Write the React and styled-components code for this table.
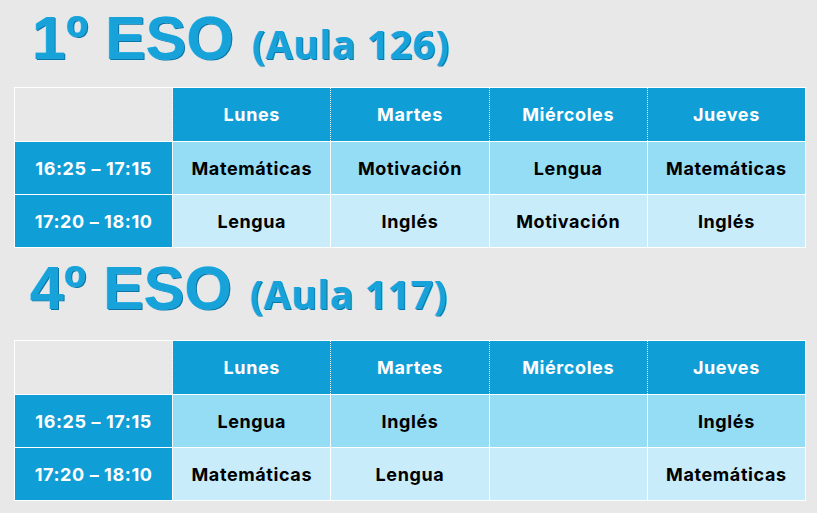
import React from "react";
import styled, { createGlobalStyle } from "styled-components";

const days = ["Lunes", "Martes", "Miércoles", "Jueves"];

const groups = [
  {
    course: "1º ESO",
    room: "(Aula 126)",
    rows: [
      ["16:25 – 17:15", ["Matemáticas", "Motivación", "Lengua", "Matemáticas"]],
      ["17:20 – 18:10", ["Lengua", "Inglés", "Motivación", "Inglés"]],
    ],
  },
  {
    course: "4º ESO",
    room: "(Aula 117)",
    rows: [
      ["16:25 – 17:15", ["Lengua", "Inglés", "", "Inglés"]],
      ["17:20 – 18:10", ["Matemáticas", "Lengua", "", "Matemáticas"]],
    ],
  },
];

export default function App() {
  return (
    <>
      <GlobalStyle />
      <StyledPage>
        {groups.map((g, k) => (
          <StyledSection key={g.course}>
            <StyledTitle $first={k === 0}>
              <StyledCourse>{g.course}</StyledCourse>
              <StyledRoom>{g.room}</StyledRoom>
            </StyledTitle>
            <StyledTable>
              <colgroup>
                <col style={{ width: "158px" }} />
                {days.map((d) => (
                  <col key={d} style={{ width: "158px" }} />
                ))}
              </colgroup>
              <thead>
                <tr>
                  <StyledCorner />
                  {days.map((d, j) => (
                    <StyledHead key={d} $last={j === days.length - 1}>
                      {d}
                    </StyledHead>
                  ))}
                </tr>
              </thead>
              <tbody>
                {g.rows.map(([time, subjects], i) => (
                  <tr key={time}>
                    <StyledTime>{time}</StyledTime>
                    {subjects.map((s, j) => (
                      <StyledCell key={j} $light={i % 2 === 1}>
                        {s}
                      </StyledCell>
                    ))}
                  </tr>
                ))}
              </tbody>
            </StyledTable>
          </StyledSection>
        ))}
      </StyledPage>
    </>
  );
}

const GlobalStyle = createGlobalStyle`
  body {
    margin: 0;
    background: #e8e8e8;
  }
`;

const StyledPage = styled.main`
  width: 817px;
  height: 513px;
  padding: 0 0 0 14px;
  box-sizing: border-box;
  overflow: hidden;
`;

const StyledSection = styled.section`
  display: flex;
  flex-direction: column;
`;

const StyledTitle = styled.h1`
  margin: 0;
  height: ${({ $first }) => ($first ? "87px" : "92px")};
  padding: ${({ $first }) => ($first ? "0 0 0 18px" : "2px 0 0 16px")};
  box-sizing: border-box;
  display: flex;
  align-items: baseline;
  gap: 18px;
  color: #17a2da;
  font-weight: 700;
  text-shadow: -0.5px -0.5px 0 #5ccaf2, 1px 1px 0 #0b76a6;
  line-height: 76px;
`;

const StyledCourse = styled.span`
  font-family: "Liberation Sans", Arial, sans-serif;
  font-size: 61px;
`;

const StyledRoom = styled.span`
  font-family: "Open Sans", sans-serif;
  font-size: 39px;
  letter-spacing: 0.6px;
`;

const StyledTable = styled.table`
  border-collapse: collapse;
  table-layout: fixed;
  width: 792px;
  font-family: "Inter", sans-serif;
  font-weight: 700;
  font-size: 18px;
  letter-spacing: 0.6px;

  td,
  th {
    border: 1px solid #ffffff;
    height: 52px;
    padding: 0;
    text-align: center;
    vertical-align: middle;
  }

  th {
    height: 53px;
  }
`;

const StyledCorner = styled.th`
  background: #e8e8e8;
  && {
    border-right: 1px dotted #ffffff;
  }
`;

const StyledHead = styled.th`
  background: #109ed6;
  color: #ffffff;
  font-weight: 700;
  && {
    border-left: 1px dotted #ffffff;
    border-right: 1px ${({ $last }) => ($last ? "solid" : "dotted")} #ffffff;
  }
`;

const StyledTime = styled.td`
  background: #109ed6;
  color: #ffffff;
`;

const StyledCell = styled.td`
  background: ${({ $light }) => ($light ? "#c9ecfa" : "#95dcf5")};
  color: #000000;
`;
